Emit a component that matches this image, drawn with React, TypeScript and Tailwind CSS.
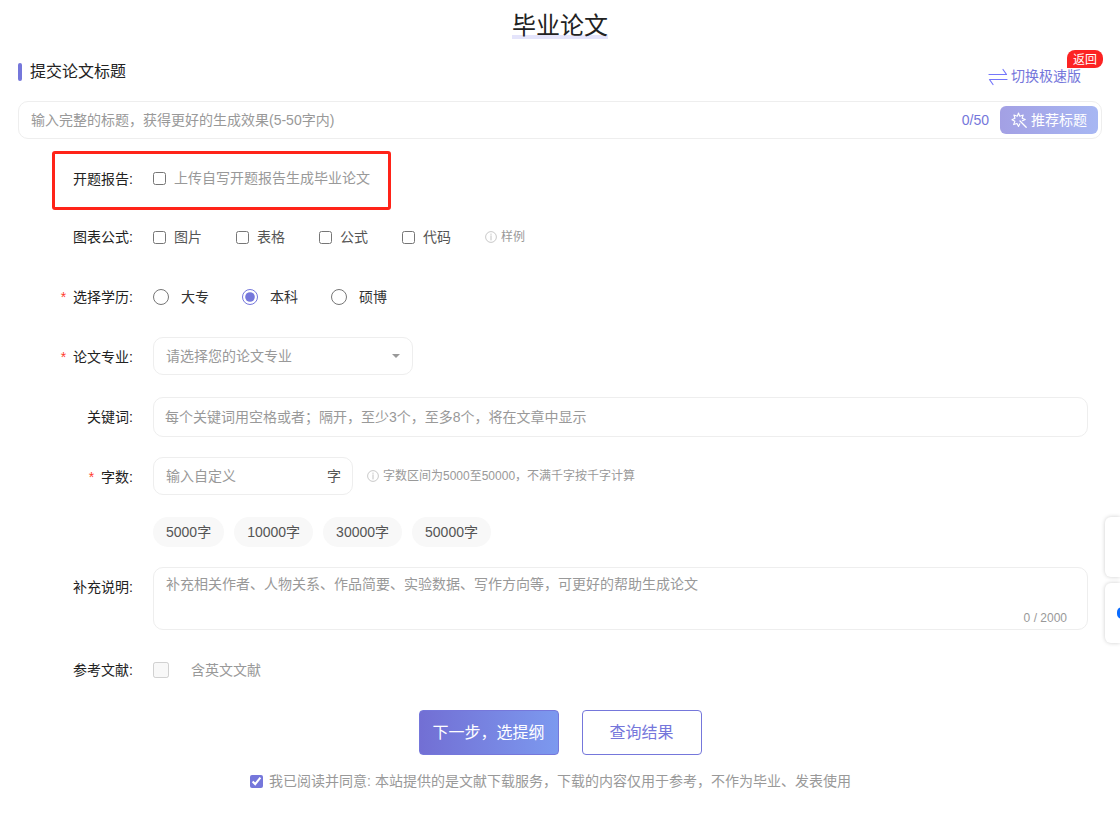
import { useState, type ReactNode } from "react";
import { clsx } from "clsx";

const CHARTS = ["图片", "表格", "公式", "代码"];
const DEGREES = ["大专", "本科", "硕博"];
const WORD_COUNTS = [5000, 10000, 30000, 50000];

interface RowProps {
  label?: string;
  htmlFor?: string;
  required?: boolean;
  className?: string;
  children: ReactNode;
}

function FormRow({ label, htmlFor, required, className = "min-h-10", children }: RowProps) {
  return (
    <div className={clsx("relative mb-5 flex", className)}>
      <div className="flex h-10 w-[115px] shrink-0 items-center justify-end text-[#222]">
        {required && <span className="mr-[7px] text-[#ff3b30]">*</span>}
        {label && <label htmlFor={htmlFor}>{label}:</label>}
      </div>
      <div className="ml-5 flex min-w-0 flex-1">{children}</div>
    </div>
  );
}

function InfoIcon() {
  return (
    <svg viewBox="0 0 12 12" className="size-3 shrink-0" fill="none" stroke="#bbb" aria-hidden="true">
      <circle cx="6" cy="6" r="5.4" strokeWidth="0.8" />
      <path d="M6 2.6v1.2M6 4.4v5" strokeWidth="0.9" />
    </svg>
  );
}

function SwapIcon() {
  return (
    <svg viewBox="0 0 20 20" className="size-5" fill="none" stroke="#7577fb" strokeWidth="1.2" aria-hidden="true">
      <path d="M1 8.5h17.5L15 3.5M19 13.5H1.5L5 18.5" strokeLinecap="round" strokeLinejoin="round" />
    </svg>
  );
}

function WandIcon() {
  return (
    <svg viewBox="0 0 16 16" className="size-4" fill="none" stroke="currentColor" strokeWidth="1.1" strokeLinecap="round" strokeLinejoin="round" aria-hidden="true">
      <path d="M7.5 1l1.3 3.2 3.4-1.2-1.1 3.2 3.2 1.2-2.9 1.4M7.5 1L6.3 4.2 2.9 3 4 6.2 1 7.8l2.9 1.4L2.6 12.6l3.4-1.1 1.5 2.9 1.3-2.7" />
      <path d="M9 9l6.2 6.2" strokeWidth="1.3" />
    </svg>
  );
}

export default function App() {
  const [title, setTitle] = useState("");
  const [degree, setDegree] = useState("本科");
  const [words, setWords] = useState("");
  const [notes, setNotes] = useState("");
  const [agreed, setAgreed] = useState(true);

  return (
    <main className="overflow-x-hidden bg-white px-[18px] pb-5 font-['Liberation_Sans','Noto_Sans_CJK_SC',sans-serif] text-sm leading-5 text-[#999]">
      <h1 className="pt-2 text-center text-2xl leading-9 text-[#222]">
        <span className="bg-[linear-gradient(#e4e4fb,#e4e4fb)] bg-[length:100%_4px] bg-bottom bg-no-repeat">
          毕业论文
        </span>
      </h1>

      {/* Section heading */}
      <div className="mt-3 flex h-[45px] items-start justify-between">
        <div className="mt-[7px] flex items-center">
          <span className="h-[18px] w-1 rounded-sm bg-[#7577db]" />
          <h2 className="ml-2 text-base leading-[18px] text-[#222]">提交论文标题</h2>
        </div>
        <div className="relative mt-2.5 mr-[21px]">
          <a href="#fast" className="flex items-center gap-[3px] text-[#7577db]">
            <SwapIcon />
            切换极速版
          </a>
          <button
            type="button"
            className="absolute -top-4 -right-[22px] h-[18px] w-9 rounded-lg rounded-bl-none bg-[#fc2323] text-xs leading-5 text-white"
          >
            返回
          </button>
        </div>
      </div>

      <div className="flex h-[38px] items-center rounded-[10px] border border-[#eee] pr-[3px] pl-3">
        <input
          aria-label="论文标题"
          maxLength={50}
          value={title}
          onChange={(e) => setTitle(e.target.value)}
          placeholder="输入完整的标题，获得更好的生成效果(5-50字内)"
          className="min-w-0 flex-1 outline-none placeholder:text-[#999]"
        />
        <span className="mr-[11px] text-[#7577db]">{title.length}/50</span>
        <button
          type="button"
          className="flex h-7 w-[98px] items-center justify-center gap-1 rounded-md bg-linear-to-r from-[#a3a0e4] to-[#a7b7f3] text-white"
        >
          <WandIcon />
          推荐标题
        </button>
      </div>

      <form className="mt-5 pr-[14px]" onSubmit={(e) => e.preventDefault()}>
        <FormRow label="开题报告" htmlFor="upload" className="h-[38px]">
          <div className="flex h-[38px] items-center gap-2">
            <input id="upload" type="checkbox" className="size-[13px]" />
            <label htmlFor="upload">上传自写开题报告生成毕业论文</label>
          </div>
          <span className="pointer-events-none absolute -top-2 left-[34px] h-[59px] w-[339px] rounded-[3px] border-3 border-[#ff2318]" />
        </FormRow>

        <FormRow label="图表公式">
          <div className="flex items-center gap-[34px] text-[#555]">
            {CHARTS.map((name) => (
              <label key={name} className="flex items-center gap-2">
                <input type="checkbox" className="size-[13px] accent-[#7577db]" />
                {name}
              </label>
            ))}
            <a href="#sample" className="flex items-center gap-1 text-xs leading-5 text-[#999]">
              <InfoIcon />
              样例
            </a>
          </div>
        </FormRow>

        <FormRow label="选择学历" required>
          <div className="flex items-center gap-[33px] text-[#333]">
            {DEGREES.map((name) => (
              <label key={name} className="flex items-center gap-3">
                <input
                  type="radio"
                  name="degree"
                  checked={degree === name}
                  onChange={() => setDegree(name)}
                  className="size-4 accent-[#7577db]"
                />
                {name}
              </label>
            ))}
          </div>
        </FormRow>

        <FormRow label="论文专业" htmlFor="major" required>
          <div className="relative h-[38px] w-[260px]">
            <select
              id="major"
              defaultValue=""
              className="h-full w-full appearance-none rounded-[10px] border border-[#eee] bg-white px-3 outline-none"
            >
              <option value="">请选择您的论文专业</option>
            </select>
            <span className="pointer-events-none absolute top-[17px] right-[13px] border-x-4 border-t-4 border-x-transparent border-t-[#999]" />
          </div>
        </FormRow>

        <FormRow label="关键词" htmlFor="keywords">
          <input
            id="keywords"
            placeholder="每个关键词用空格或者；隔开，至少3个，至多8个，将在文章中显示"
            className="h-10 w-full rounded-[10px] border border-[#eee] px-[11px] outline-none placeholder:text-[#999]"
          />
        </FormRow>

        <FormRow label="字数" htmlFor="words" required>
          <div className="flex h-[38px] w-[200px] items-center rounded-[10px] border border-[#eee] pr-[11px] pl-3">
            <input
              id="words"
              value={words}
              onChange={(e) => setWords(e.target.value)}
              placeholder="输入自定义"
              className="min-w-0 flex-1 outline-none placeholder:text-[#999]"
            />
            <span className="text-[#555]">字</span>
          </div>
          <p className="ml-[14px] flex h-[38px] items-center gap-1 text-xs">
            <InfoIcon />
            字数区间为5000至50000，不满千字按千字计算
          </p>
        </FormRow>

        <FormRow className="h-[30px]">
          <div className="flex gap-2.5">
            {WORD_COUNTS.map((count) => (
              <button
                key={count}
                type="button"
                onClick={() => setWords(String(count))}
                className="h-[30px] rounded-full bg-[#f8f8f8] px-[13px] text-[#555]"
              >
                {count}字
              </button>
            ))}
          </div>
        </FormRow>

        <FormRow label="补充说明" htmlFor="notes">
          <div className="relative h-[63px] w-full">
            <textarea
              id="notes"
              maxLength={2000}
              value={notes}
              onChange={(e) => setNotes(e.target.value)}
              placeholder="补充相关作者、人物关系、作品简要、实验数据、写作方向等，可更好的帮助生成论文"
              className="h-full w-full resize-none rounded-[10px] border border-[#eee] px-3 py-1.5 outline-none placeholder:text-[#999]"
            />
            <span className="absolute right-[21px] bottom-1 text-xs leading-4">{notes.length} / 2000</span>
          </div>
        </FormRow>

        <FormRow label="参考文献" htmlFor="english">
          <div className="flex items-center gap-[22px]">
            <input id="english" type="checkbox" disabled className="size-4" />
            <label htmlFor="english">含英文文献</label>
          </div>
        </FormRow>

        <div className="-mr-[14px] flex justify-center gap-[23px] text-base">
          <button
            type="submit"
            className="h-[45px] w-[140px] rounded-[4px] border border-[#7577db] bg-linear-to-r from-[#726fd4] to-[#7c99ef] text-white"
          >
            下一步，选提纲
          </button>
          <button type="button" className="h-[45px] w-[120px] rounded-[4px] border border-[#7577db] text-[#7577db]">
            查询结果
          </button>
        </div>

        <label className="mt-4 flex items-center justify-center gap-1.5 pr-[5px]">
          <input
            type="checkbox"
            checked={agreed}
            onChange={(e) => setAgreed(e.target.checked)}
            className="size-[13px] accent-[#7577db]"
          />
          我已阅读并同意: 本站提供的是文献下载服务，下载的内容仅用于参考，不作为毕业、发表使用
        </label>
      </form>

      {/* Floating side tools */}
      <aside className="fixed top-[513px] right-0 flex flex-col gap-1.5 overflow-hidden py-1 pl-1">
        <div className="h-[60px] w-[15px] rounded-l-md bg-white shadow-[0_0_4px_rgba(0,0,0,0.2)]" />
        <div className="flex h-[60px] w-[15px] items-center overflow-hidden rounded-l-md bg-white pl-3 shadow-[0_0_4px_rgba(0,0,0,0.2)]">
          <span className="h-3 w-6 shrink-0 rounded-l-[5px] bg-[#0a6cff]" />
        </div>
      </aside>
    </main>
  );
}
